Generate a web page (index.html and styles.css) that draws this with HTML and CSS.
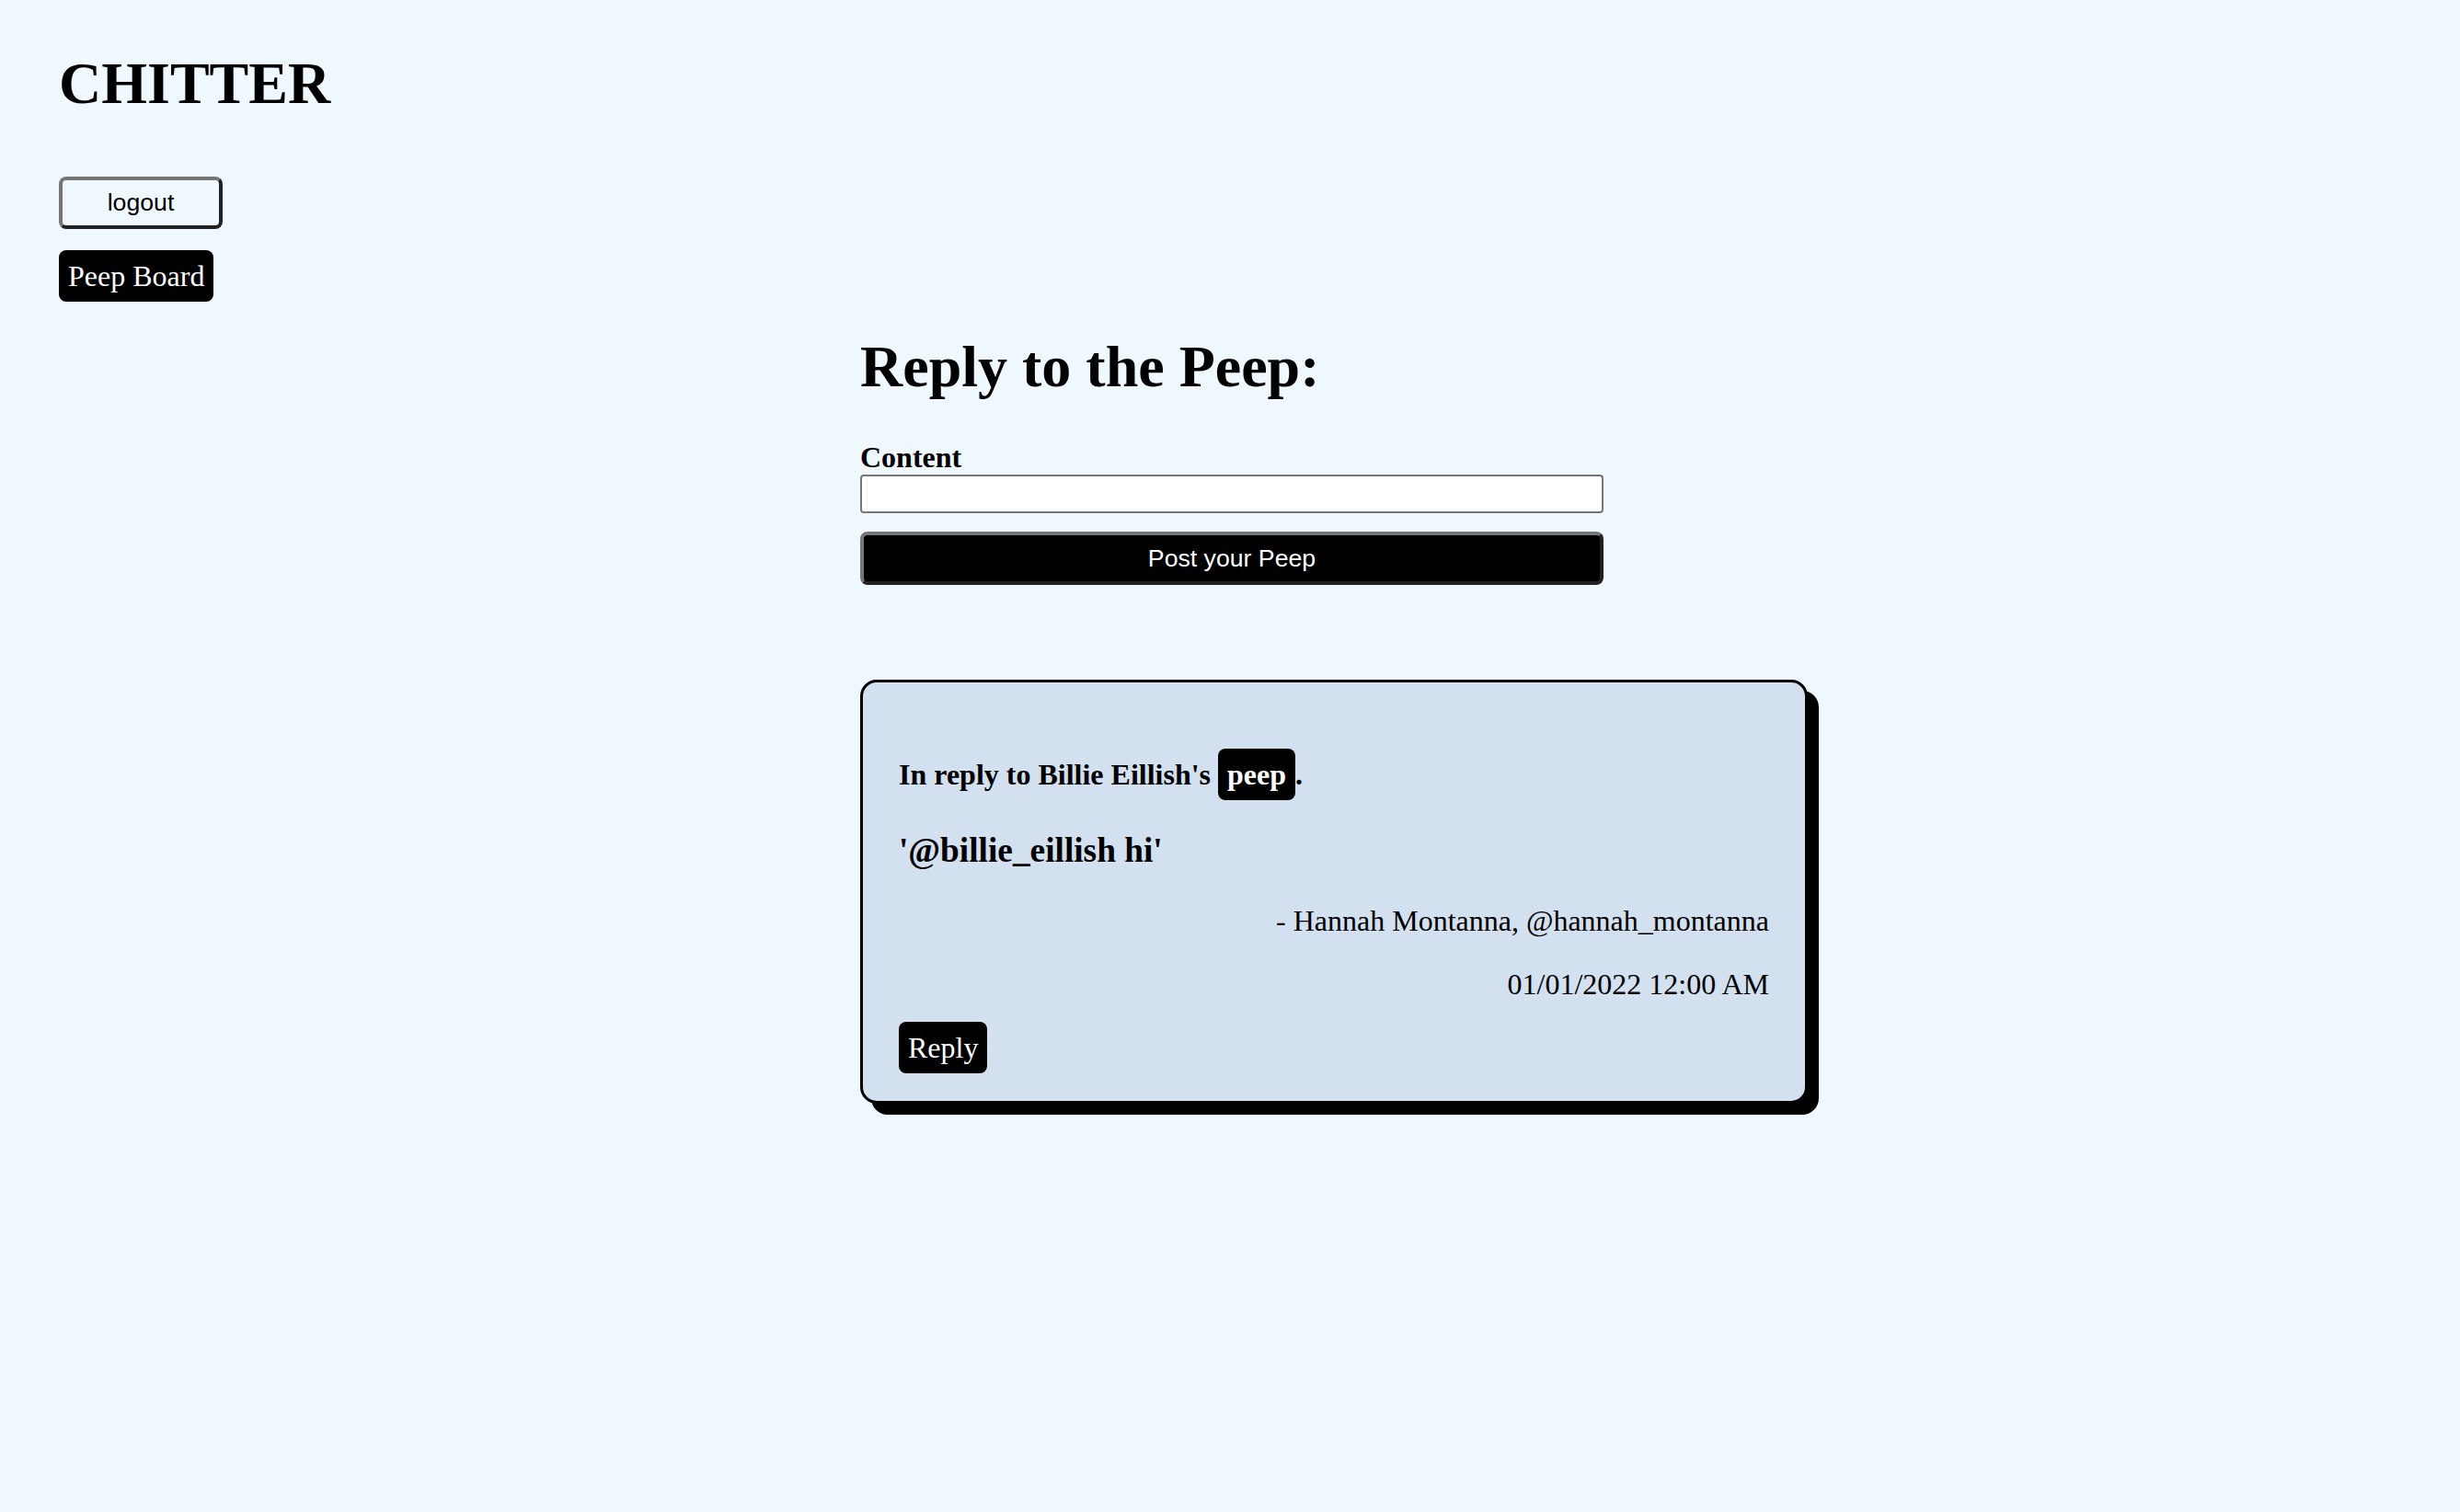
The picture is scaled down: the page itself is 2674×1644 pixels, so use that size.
FILE: index.html
```html
<!DOCTYPE html>
<html lang="en">
<head>
<meta charset="utf-8">
<title>Chitter</title>
<link rel="stylesheet" href="styles.css">
</head>
<body>
  <header class="site-header">
    <h1 class="logo">CHITTER</h1>
    <button class="logout-btn" type="button">logout</button>
    <div class="nav-links">
      <a class="pill" href="#">Peep Board</a>
    </div>
  </header>

  <main class="main">
    <h1 class="page-title">Reply to the Peep:</h1>
    <form class="reply-form">
      <label class="field-label" for="content">Content</label>
      <input class="text-input" id="content" type="text">
      <button class="post-btn" type="button">Post your Peep</button>
    </form>

    <section class="peep-card">
      <h4 class="reply-to">In reply to Billie Eillish's <a class="pill" href="#">peep</a>.</h4>
      <h3 class="peep-content">'@billie_eillish hi'</h3>
      <p class="peep-meta">- Hannah Montanna, @hannah_montanna</p>
      <p class="peep-meta">01/01/2022 12:00 AM</p>
      <div class="card-actions">
        <a class="pill" href="#">Reply</a>
      </div>
    </section>
  </main>
</body>
</html>
```

FILE: styles.css
```css
html, body {
  background: #f0f8ff;
}

body {
  margin: 0;
  padding: 54px 64px 80px;
  font-family: "Liberation Serif", "Times New Roman", serif;
  font-size: 32px;
  color: #000;
}

.logo {
  margin: 0;
  font-size: 64px;
  font-weight: bold;
  line-height: normal;
}

.logout-btn {
  display: block;
  margin-top: 64px;
  width: 178px;
  height: 57px;
  padding: 0;
  box-sizing: border-box;
  background: transparent;
  border: 4px outset #767676;
  border-radius: 8px;
  font-family: "Liberation Sans", Arial, sans-serif;
  font-size: 26.67px;
  color: #000;
}

.nav-links {
  margin-top: 33px;
}

.pill {
  display: inline;
  background: #000;
  color: #fff;
  text-decoration: none;
  padding: 10px;
  border-radius: 8px;
}

.main {
  margin-left: 871px;
}

.page-title {
  margin: 43px 0 43px;
  font-size: 64px;
  font-weight: bold;
  line-height: normal;
}

.reply-form {
  width: 808px;
}

.field-label {
  display: block;
  font-weight: bold;
}

.text-input {
  display: block;
  width: 808px;
  height: 42px;
  box-sizing: border-box;
  margin: 0;
  border: 2px solid #767676;
  border-radius: 4px;
  background: #fff;
}

.post-btn {
  display: block;
  margin-top: 20px;
  width: 808px;
  height: 58px;
  box-sizing: border-box;
  padding: 0;
  background: #000;
  color: #fff;
  border: 4px outset #767676;
  border-radius: 8px;
  font-family: "Liberation Sans", Arial, sans-serif;
  font-size: 26.67px;
}

.peep-card {
  margin-top: 103px;
  width: 1030px;
  box-sizing: border-box;
  padding: 39px;
  background: #d3e0f0;
  border: 3px solid #000;
  border-radius: 18px;
  box-shadow: 12px 12px 0 0 #000;
}

.reply-to {
  margin: 42.56px 0;
  font-size: 32px;
  font-weight: bold;
}

.peep-content {
  margin: 37.33px 0;
  font-size: 37.33px;
  font-weight: bold;
}

.peep-meta {
  margin: 32px 0;
  text-align: right;
}

.card-actions {
  margin: 0;
}
```
